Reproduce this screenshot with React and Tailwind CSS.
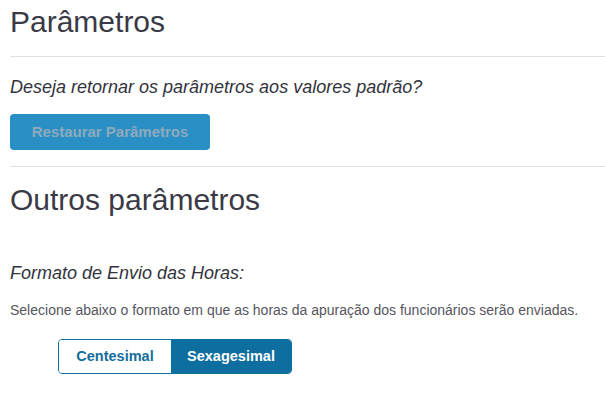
import React from 'react'

const App = () => {
    const [formato, setFormato] = React.useState('sexagesimal')

    return (
        <div className="w-[605px] h-[405px] bg-white pl-[10px] overflow-hidden" style={{ fontFamily: '"Liberation Sans", Arial, sans-serif' }}>
            <h1 className="text-[30px] leading-[36px] text-[#3a3a46] pt-[4px] pb-[16px]">Parâmetros</h1>
            <hr className="border-t border-[#e0e0e0]" />
            <p className="italic text-[18px] leading-[22px] text-[#33333d] mt-[19px]">
                Deseja retornar os parâmetros aos valores padrão?
            </p>
            <button
                type="button"
                disabled
                className="mt-[16px] w-[200px] h-[36px] rounded-[4px] bg-[#2a8fc5] text-[#8eaabb] font-bold text-[15px]"
            >
                Restaurar Parâmetros
            </button>
            <hr className="border-t border-[#e0e0e0] mt-[16px]" />
            <h2 className="text-[30px] leading-[36px] text-[#3a3a46] mt-[15px]">Outros parâmetros</h2>
            <p className="italic text-[18px] leading-[22px] text-[#33333d] mt-[44px]">
                Formato de Envio das Horas:
            </p>
            <p className="text-[14px] leading-[16px] text-[#555560] mt-[18px]">
                Selecione abaixo o formato em que as horas da apuração dos funcionários serão enviadas.
            </p>
            <div className="flex ml-[48px] mt-[21px] w-[234px] h-[35px] border border-[#0f6ea0] rounded-[4px] overflow-hidden">
                <button
                    type="button"
                    onClick={() => setFormato('centesimal')}
                    className={formato === 'centesimal'
                        ? 'w-[112px] bg-[#0f6ea0] text-white font-bold text-[14.5px]'
                        : 'w-[112px] bg-white text-[#136c9c] font-bold text-[14.5px]'}
                >
                    Centesimal
                </button>
                <button
                    type="button"
                    onClick={() => setFormato('sexagesimal')}
                    className={formato === 'sexagesimal'
                        ? 'flex-1 bg-[#0f6ea0] text-white font-bold text-[14.5px]'
                        : 'flex-1 bg-white text-[#136c9c] font-bold text-[14.5px]'}
                >
                    Sexagesimal
                </button>
            </div>
        </div>
    )
}

export default App
